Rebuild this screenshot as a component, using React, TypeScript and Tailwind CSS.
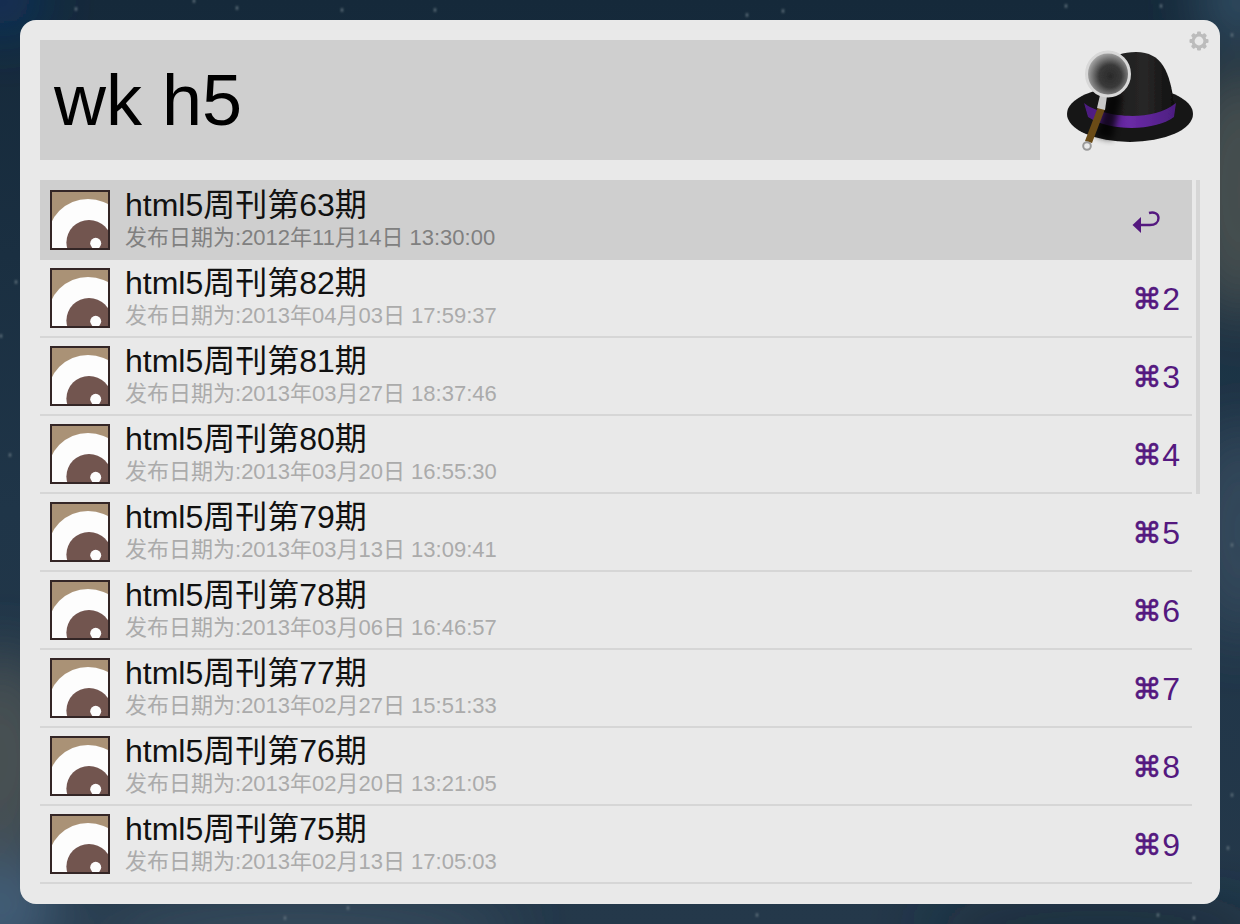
/**
 * Alfred launcher window
 * Search box + hat logo + result list over a night sky wallpaper
 */

const results = [
  { n: 63, date: '2012年11月14日 13:30:00', key: '' },
  { n: 82, date: '2013年04月03日 17:59:37', key: '2' },
  { n: 81, date: '2013年03月27日 18:37:46', key: '3' },
  { n: 80, date: '2013年03月20日 16:55:30', key: '4' },
  { n: 79, date: '2013年03月13日 13:09:41', key: '5' },
  { n: 78, date: '2013年03月06日 16:46:57', key: '6' },
  { n: 77, date: '2013年02月27日 15:51:33', key: '7' },
  { n: 76, date: '2013年02月20日 13:21:05', key: '8' },
  { n: 75, date: '2013年02月13日 17:05:03', key: '9' },
];

const stars = [
  [76, 9], [194, 1], [237, 8], [342, 10], [435, 10], [747, 15], [783, 11], [1066, 6],
  [1161, 6], [757, 915], [1158, 915], [1194, 918], [285, 918], [348, 908], [16, 282], [10, 455],
  [1232, 35], [1232, 545], [1232, 795], [1228, 848], [1, 336],
];

function Wallpaper() {
  return (
    <svg className="absolute inset-0" width="1240" height="924" viewBox="0 0 1240 924">
      <defs>
        <linearGradient id="sky" x1="0" y1="0" x2="0" y2="1">
          <stop offset="0%" stopColor="#15293a" />
          <stop offset="55%" stopColor="#1f3548" />
          <stop offset="100%" stopColor="#24384a" />
        </linearGradient>
        <filter id="soft" x="-50%" y="-50%" width="200%" height="200%">
          <feGaussianBlur stdDeviation="30" />
        </filter>
        <filter id="glow">
          <feGaussianBlur stdDeviation="0.8" />
        </filter>
      </defs>
      <rect width="1240" height="924" fill="url(#sky)" />
      <g filter="url(#soft)">
        <ellipse cx="0" cy="760" rx="60" ry="110" fill="#4a5152" />
        <ellipse cx="0" cy="910" rx="60" ry="50" fill="#44607a" />
        <ellipse cx="1240" cy="190" rx="60" ry="130" fill="#474f4f" />
        <ellipse cx="1240" cy="530" rx="50" ry="110" fill="#36495c" />
        <ellipse cx="300" cy="930" rx="220" ry="28" fill="#3a5061" />
        <ellipse cx="1100" cy="930" rx="180" ry="20" fill="#192a38" />
        <ellipse cx="0" cy="0" rx="40" ry="30" fill="#0a3468" />
        <ellipse cx="1240" cy="0" rx="40" ry="30" fill="#3f6078" />
      </g>
      <g filter="url(#glow)" fill="#64747f">
        {stars.map(([x, y]) => (
          <ellipse key={`${x}-${y}`} cx={x} cy={y} rx="1.2" ry="2" />
        ))}
      </g>
    </svg>
  );
}

function Thumb() {
  return (
    <svg width="60" height="60" viewBox="0 0 60 60" className="shrink-0">
      <defs>
        <clipPath id="thumb-clip">
          <rect x="2" y="2" width="56" height="56" />
        </clipPath>
        <filter id="thumb-soft">
          <feGaussianBlur stdDeviation="0.5" />
        </filter>
      </defs>
      <rect width="60" height="60" fill="#342626" />
      <g clipPath="url(#thumb-clip)">
        <rect width="60" height="60" fill="#aa9276" />
        <g filter="url(#thumb-soft)">
          <circle cx="38" cy="49.5" r="40.5" fill="#fdfdfd" />
          <circle cx="39" cy="52.6" r="22.6" fill="#725450" />
          <circle cx="45.7" cy="53.3" r="5.5" fill="#fdfdfd" />
        </g>
      </g>
    </svg>
  );
}

function AlfredHat() {
  return (
    <svg width="136" height="120" viewBox="1064 40 136 120">
      <defs>
        <radialGradient id="lens" cx="55%" cy="55%" r="58%">
          <stop offset="0%" stopColor="#2a2a2a" />
          <stop offset="45%" stopColor="#3a3a3a" />
          <stop offset="100%" stopColor="#b8b8b8" />
        </radialGradient>
        <linearGradient id="crown" x1="0" y1="0" x2="1" y2="0">
          <stop offset="0%" stopColor="#151515" />
          <stop offset="65%" stopColor="#282727" />
          <stop offset="100%" stopColor="#0f0f0f" />
        </linearGradient>
        <linearGradient id="band" x1="0" y1="0" x2="1" y2="0">
          <stop offset="0%" stopColor="#4a1b7c" />
          <stop offset="50%" stopColor="#6a2aa6" />
          <stop offset="100%" stopColor="#4c1e80" />
        </linearGradient>
        <filter id="hat-soft">
          <feGaussianBlur stdDeviation="0.6" />
        </filter>
        <filter id="hat-shadow" x="-50%" y="-50%" width="200%" height="200%">
          <feGaussianBlur stdDeviation="3" />
        </filter>
      </defs>
      <g filter="url(#hat-soft)">
        {/* brim */}
        <ellipse cx="1130" cy="114" rx="63" ry="28" fill="#141414" />
        {/* crown */}
        <path d="M1092 108 C1096 66 1110 52 1136 52 C1162 52 1170 72 1174 104 C1150 122 1110 122 1092 108 Z" fill="url(#crown)" />
        {/* band */}
        <path d="M1084 103 C1100 116 1150 124 1176 103 L1174 117 C1156 131 1110 132 1088 117 Z" fill="url(#band)" />
      </g>
      {/* shadow of the magnifier on the hat */}
      <path d="M1108 92 L1122 96 L1112 140 L1096 136 Z" fill="#000000" opacity="0.75" filter="url(#hat-shadow)" />
      <g filter="url(#hat-soft)">
        {/* magnifier */}
        <path d="M1098 107 L1105 109 L1092 143 L1085 141 Z" fill="#6a4b16" />
        <circle cx="1087" cy="146" r="3.8" fill="none" stroke="#9a9a9a" strokeWidth="2" />
        <path d="M1100 95 L1107 96 L1105 110 L1097 108 Z" fill="#c8c8c8" />
        <ellipse cx="1108" cy="74" rx="21.5" ry="22" fill="url(#lens)" stroke="#d8d8d8" strokeWidth="3" />
      </g>
    </svg>
  );
}

function ReturnIcon() {
  return (
    <svg width="30" height="24" viewBox="1132 210 30 24" className="block">
      <path d="M1149 212 C1154 210.5 1158.5 212.5 1158.5 217 C1158.5 221.5 1155 224 1150 224 L1139 224" fill="none" stroke="#54187f" strokeWidth="2.4" />
      <path d="M1132.5 224 L1141 216 L1141 232 Z" fill="#54187f" />
    </svg>
  );
}

export default function App() {
  return (
    <div className="relative h-[924px] w-[1240px] overflow-hidden p-5 font-['Liberation_Sans','Noto_Sans_CJK_SC',sans-serif]">
      <Wallpaper />
      <div className="relative h-[884px] w-[1200px] rounded-[16px] bg-[#e9e9e9] p-5">
        {/* Settings gear */}
        <svg className="absolute right-[11px] top-[11px]" width="20" height="20" viewBox="0 0 20 20">
          <g fill="#bcbcbc">
            <circle cx="10" cy="10" r="7.5" />
            <rect x="8" y="0.5" width="4" height="19" rx="1" />
            <rect x="8" y="0.5" width="4" height="19" rx="1" transform="rotate(45 10 10)" />
            <rect x="8" y="0.5" width="4" height="19" rx="1" transform="rotate(90 10 10)" />
            <rect x="8" y="0.5" width="4" height="19" rx="1" transform="rotate(135 10 10)" />
          </g>
          <circle cx="10" cy="10" r="4.4" fill="#e9e9e9" />
        </svg>

        {/* Search box */}
        <div className="flex h-[120px] items-center">
          <div className="flex h-[120px] w-[1000px] items-center bg-[#cfcfcf] pl-[14px] text-[72px] leading-none text-black">
            wk h5
          </div>
          <div className="ml-[24px]">
            <AlfredHat />
          </div>
        </div>

        {/* Results */}
        <div className="mt-5 flex">
          <div className="w-[1152px]">
            {results.map((r, i) => (
              <div
                key={r.n}
                className={
                  i === 0
                    ? 'flex h-[80px] items-center bg-[#cfcfcf] pl-[10px]'
                    : 'flex h-[78px] items-center border-b-2 border-[#d6d6d6] pl-[10px]'
                }
              >
                <Thumb />
                <div className="-mt-[2px] ml-[15px] flex-1">
                  <div className="text-[32px] leading-[38px] text-[#111111]">html5周刊第{r.n}期</div>
                  <div className={i === 0 ? 'text-[22px] leading-[28px] text-[#808080]' : 'text-[22px] leading-[28px] text-[#ababab]'}>
                    发布日期为:{r.date}
                  </div>
                </div>
                <div className="flex items-center pr-[12px] text-[32px] leading-[40px] text-[#54187f]">
                  {r.key ? (
                    <span className="relative top-[1px] flex items-center">
                      <span className="w-[30px] font-['DejaVu_Sans',sans-serif] text-[29px] [-webkit-text-stroke:0.6px_#54187f]">⌘</span>
                      {r.key}
                    </span>
                  ) : (
                    <span className="relative right-[18px] top-[3px] inline-flex">
                      <ReturnIcon />
                    </span>
                  )}
                </div>
              </div>
            ))}
          </div>
          {/* Scrollbar */}
          <div className="ml-1 h-[314px] w-1 bg-[#d6d6d6]" />
        </div>
      </div>
    </div>
  );
}
